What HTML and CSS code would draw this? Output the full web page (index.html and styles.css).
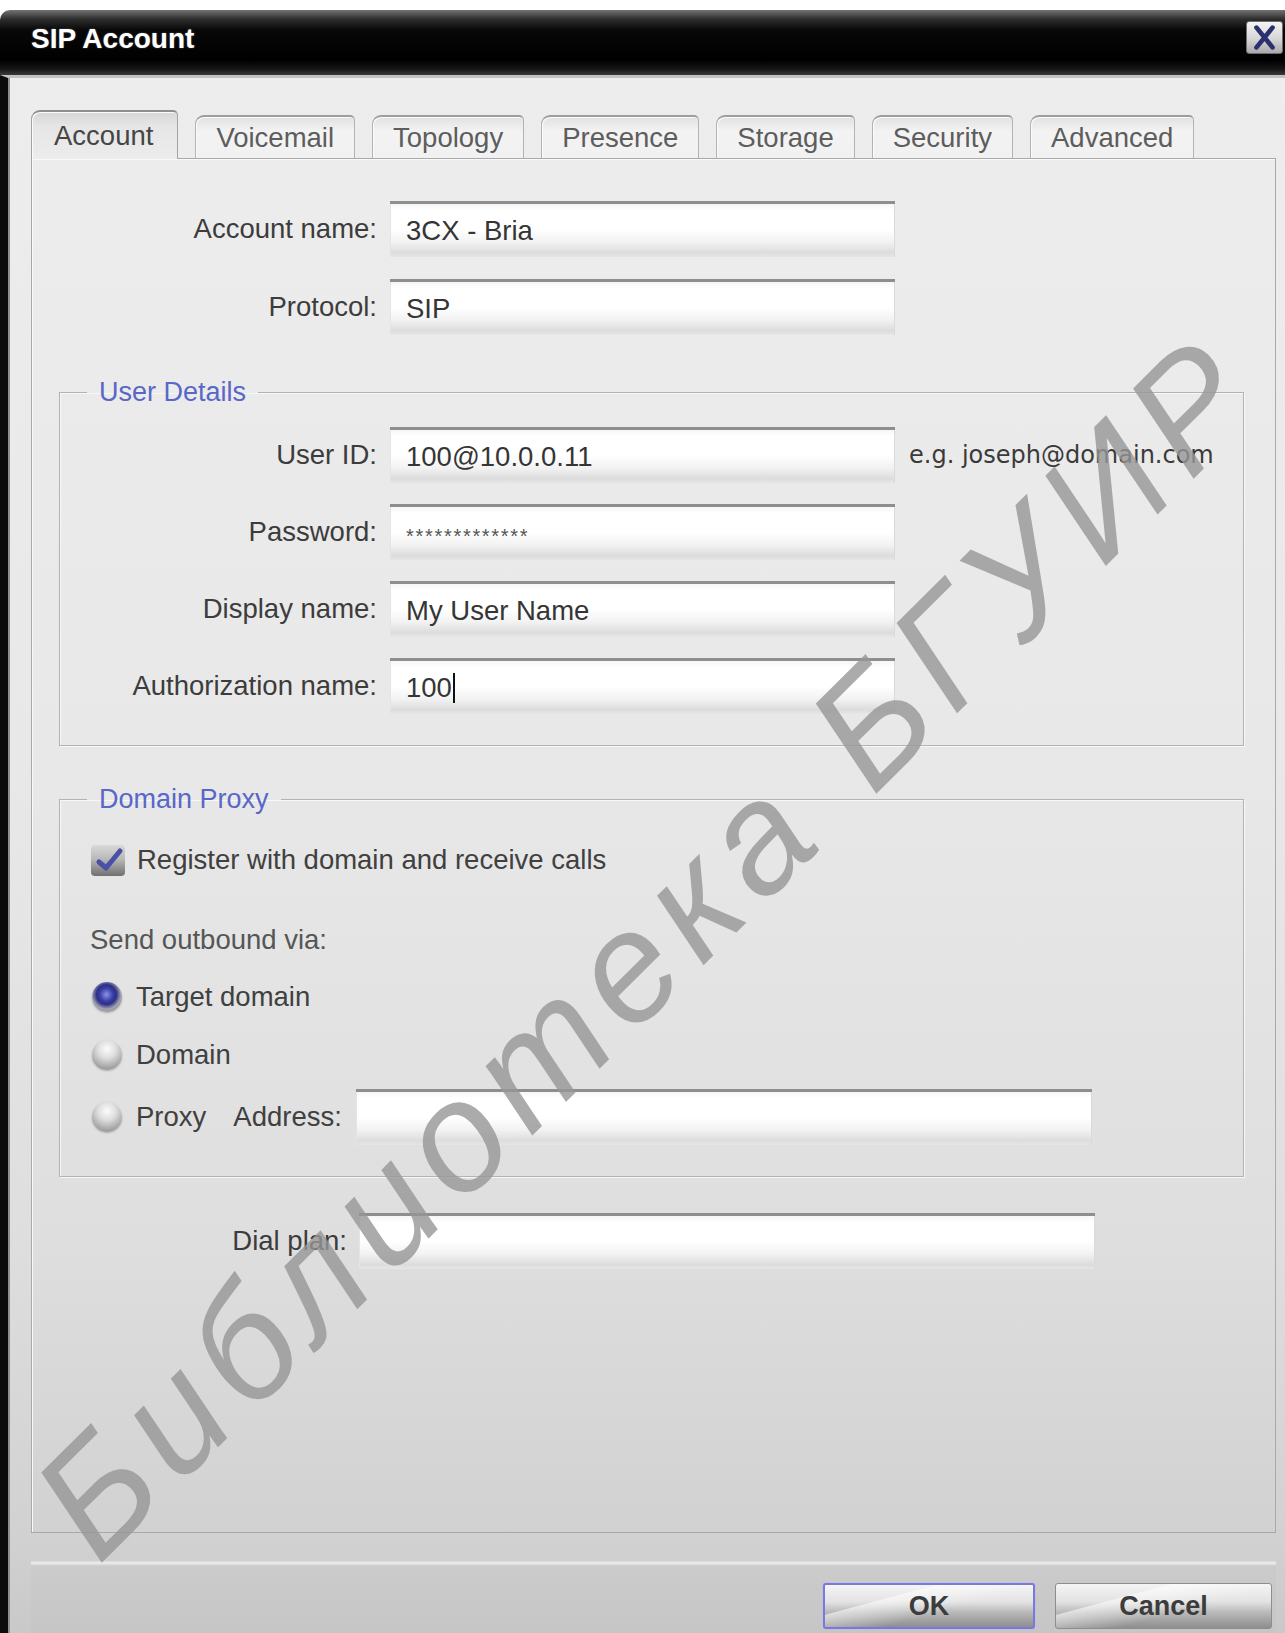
FILE: index.html
```html
<!DOCTYPE html>
<html lang="en">
<head>
<meta charset="utf-8">
<title>SIP Account</title>
<link rel="stylesheet" href="styles.css">
</head>
<body>
<div class="window">
  <header class="titlebar">
    <h1 class="title">SIP Account</h1>
    <button class="close" type="button" aria-label="Close">
      <svg viewBox="0 0 37 33" width="35" height="31" aria-hidden="true">
        <path d="M10 6 L27 27 M27 6 L10 27" stroke="#2b3170" stroke-width="5" stroke-linecap="round"/>
      </svg>
    </button>
  </header>

  <div class="client">
    <nav class="tabs">
      <div class="tab active">Account</div>
      <div class="tab">Voicemail</div>
      <div class="tab">Topology</div>
      <div class="tab">Presence</div>
      <div class="tab">Storage</div>
      <div class="tab">Security</div>
      <div class="tab">Advanced</div>
    </nav>

    <section class="panel">
      <div class="row top-row">
        <span class="lbl">Account name:</span>
        <div class="field">3CX - Bria</div>
      </div>
      <div class="row top-row">
        <span class="lbl">Protocol:</span>
        <div class="field">SIP</div>
      </div>

      <fieldset class="group user-group">
        <legend>User Details</legend>
        <div class="row">
          <span class="lbl">User ID:</span>
          <div class="field">100@10.0.0.11</div>
          <span class="hint">e.g. joseph@domain.com</span>
        </div>
        <div class="row">
          <span class="lbl">Password:</span>
          <div class="field"><span class="secret">*************</span></div>
        </div>
        <div class="row">
          <span class="lbl">Display name:</span>
          <div class="field">My User Name</div>
        </div>
        <div class="row">
          <span class="lbl">Authorization name:</span>
          <div class="field">100<span class="caret"></span></div>
        </div>
      </fieldset>

      <fieldset class="group proxy-group">
        <legend>Domain Proxy</legend>
        <div class="proxy-body">
          <div class="check-row">
            <span class="checkbox">
              <svg viewBox="0 0 37 34" width="37" height="34" aria-hidden="true">
                <defs>
                  <linearGradient id="boxFill" x1="0" y1="0" x2="0" y2="1">
                    <stop offset="0" stop-color="#d9d9d9"/>
                    <stop offset="0.45" stop-color="#b9b9b9"/>
                    <stop offset="1" stop-color="#6f6f6f"/>
                  </linearGradient>
                </defs>
                <rect x="1" y="2" width="34" height="31" rx="4" fill="url(#boxFill)"/>
                <path d="M9 19 L16 25 L30 8" fill="none" stroke="#4c4fa6" stroke-width="5" stroke-linecap="round" stroke-linejoin="round"/>
              </svg>
            </span>
            <span class="opt">Register with domain and receive calls</span>
          </div>
          <div class="send-via">Send outbound via:</div>
          <div class="radio-row target"><span class="radio on"></span><span class="opt">Target domain</span></div>
          <div class="radio-row domain"><span class="radio"></span><span class="opt">Domain</span></div>
          <div class="radio-row proxy-row">
            <span class="radio"></span><span class="opt">Proxy</span>
            <span class="addr-label">Address:</span>
            <div class="field wide"></div>
          </div>
        </div>
      </fieldset>

      <div class="row dial-row">
        <span class="lbl">Dial plan:</span>
        <div class="field wide"></div>
      </div>
    </section>

    <footer class="buttons">
      <button class="btn default" type="button">OK</button>
      <button class="btn cancel" type="button">Cancel</button>
    </footer>
  </div>
</div>

<div class="watermark">Библиотека БГУИР</div>
</body>
</html>
```

FILE: styles.css
```css
html, body {
  margin: 0;
  height: 1633px;
}

body {
  position: relative;
  overflow: hidden;
  background: #ffffff;
  font-family: "Liberation Sans", Arial, sans-serif;
}

/* ---------- window frame ---------- */
.window {
  margin-top: 10px;
  height: 1623px;
  display: flex;
  flex-direction: column;
}

.titlebar {
  flex: none;
  height: 65px;
  display: flex;
  justify-content: space-between;
  align-items: flex-start;
  border-top-left-radius: 10px;
  background: linear-gradient(to bottom,
    #737373 0px, #2e2e2e 9px, #080808 20px, #000 50px,
    #151515 59px, #3b3b3b 65px);
}

.title {
  margin: 0;
  padding: 15px 0 0 31px;
  font: bold 28px/1 "Liberation Sans", Arial, sans-serif;
  color: #ffffff;
  text-shadow: 0 0 2px rgba(255, 255, 255, 0.35);
}

.close {
  margin: 11px 2px 0 0;
  width: 37px;
  height: 33px;
  padding: 0;
  display: flex;
  align-items: center;
  justify-content: center;
  border: 1px solid #6d6d6d;
  border-radius: 3px;
  background: linear-gradient(to bottom, #f4f4f4, #d6d6d6 55%, #a9a9a9);
}

.client {
  flex: 1;
  display: flex;
  flex-direction: column;
  border-left: 8px solid #0b0b0b;
  border-top: 3px solid #c2c2c2;
  padding: 32px 9px 0 23px;
  background: linear-gradient(to bottom,
    #ededed 0%, #e8e8e8 45%, #dedede 75%, #d1d1d1 94%, #c9c9c9 100%);
  box-shadow: inset 2px 0 0 #8f8f8f;
}

/* ---------- tabs ---------- */
.tabs {
  flex: none;
  height: 49px;
  margin-bottom: -1px;
  display: flex;
  align-items: flex-end;
  gap: 17px;
  position: relative;
  z-index: 1;
}

.tab {
  box-sizing: border-box;
  height: 43px;
  margin-bottom: 1px;
  padding: 0 20px;
  display: flex;
  align-items: center;
  border: 1px solid #b3b3b3;
  border-top: 2px solid #9d9d9d;
  border-bottom: none;
  border-radius: 9px 5px 0 0;
  background: linear-gradient(to bottom, #e1e1e1, #f3f3f3 35%, #f1f1f1);
  font-size: 27.5px;
  color: #5d5d5d;
  box-shadow: inset 1px 1px 0 #fbfbfb;
}

.tab.active {
  height: 49px;
  margin-bottom: 0;
  padding: 0 24px 0 22px;
  border-color: #a4a4a4;
  border-top: 2px solid #8e8e8e;
  background: linear-gradient(to bottom, #d6d6d6, #e6e6e6 30%, #ececec);
  color: #454545;
}

/* ---------- content panel ---------- */
.panel {
  flex: 1;
  display: flex;
  flex-direction: column;
  padding-top: 42px;
  border: 1px solid #a9a9a9;
  box-shadow: inset 1px 1px 0 #f9f9f9;
}

.row {
  display: flex;
  align-items: center;
  height: 56px;
  flex: none;
}

.top-row + .top-row { margin-top: 22px; }

.lbl {
  box-sizing: border-box;
  width: 358px;
  padding-right: 13px;
  text-align: right;
  font-size: 27.5px;
  color: #3c3c3c;
  white-space: nowrap;
}

.field {
  box-sizing: border-box;
  width: 505px;
  height: 56px;
  padding-left: 16px;
  display: flex;
  align-items: center;
  border-top: 3px solid #8e8e8e;
  background: linear-gradient(to bottom,
    #f6f6f6 0%, #ffffff 12%, #ffffff 48%, #f2f2f2 72%, #dcdcdc 92%, #e6e6e6 100%);
  box-shadow: inset 1px 0 0 #e4e4e4, inset -1px 0 0 #dadada;
  font-size: 27.5px;
  color: #353535;
}

.field.wide { width: 736px; }

.secret {
  font-size: 20px;
  letter-spacing: 1.7px;
  color: #555;
  position: relative;
  top: 3px;
}

.caret {
  display: inline-block;
  width: 2px;
  height: 30px;
  margin-left: 1px;
  background: #111;
}

.hint {
  margin-left: 14px;
  font-family: "DejaVu Sans", Verdana, sans-serif;
  font-size: 24px;
  color: #3a3a3a;
  white-space: nowrap;
}

/* ---------- group boxes ---------- */
.group {
  margin: 0 31px 0 27px;
  padding: 19px 0 31px 0;
  min-width: 0;
  border: 1px solid #b3b3b3;
  box-shadow: 1px 1px 0 #f7f7f7, inset 1px 1px 0 #f7f7f7;
}

.group legend {
  margin-left: 27px;
  padding: 0 12px;
  font-size: 27px;
  line-height: 32px;
  color: #5967c8;
}

.user-group { margin-top: 41px; }
.user-group .lbl { width: 330px; }
.user-group .row + .row { margin-top: 21px; }

.proxy-group {
  margin-top: 37px;
  padding-top: 28px;
}

.proxy-body { padding-left: 30px; }

.check-row {
  height: 34px;
  display: flex;
  align-items: center;
}

.checkbox {
  display: block;
  width: 37px;
  height: 34px;
  margin-right: 10px;
}

.checkbox svg { display: block; }

.opt {
  font-size: 27.5px;
  color: #404040;
  white-space: nowrap;
}

.send-via {
  margin-top: 47px;
  height: 32px;
  line-height: 32px;
  font-size: 27.5px;
  color: #565656;
}

.radio-row {
  display: flex;
  align-items: center;
  height: 32px;
}

.radio-row.target { margin-top: 25px; }
.radio-row.domain { margin-top: 26px; }
.radio-row.proxy-row { margin-top: 18px; height: 56px; }

.radio {
  flex: none;
  width: 30px;
  height: 30px;
  margin: 0 14px 0 2px;
  border-radius: 50%;
  background: radial-gradient(circle at 50% 30%,
    #fbfbfb 0%, #dedede 35%, #b0b0b0 65%, #7c7c7c 100%);
  box-shadow: 0 1px 2px rgba(0, 0, 0, 0.25);
}

.radio.on {
  background: radial-gradient(circle at 48% 42%,
    #8e92e6 0%, #3b3fa8 28%, #2b2f86 42%, #a4a4ae 62%, #7b7b7b 100%);
}

.addr-label {
  margin: 0 14px 0 27px;
  font-size: 27.5px;
  color: #404040;
}

.dial-row { margin-top: 36px; }
.dial-row .lbl { width: 327px; padding-right: 12px; }

/* ---------- bottom button bar ---------- */
.buttons {
  flex: none;
  height: 100px;
  box-sizing: border-box;
  padding: 50px 4px 0 0;
  display: flex;
  justify-content: flex-end;
  align-items: flex-start;
  gap: 20px;
  background: linear-gradient(to bottom,
    transparent 0px, transparent 28px,
    #d9d9d9 28px, #ededed 30px, #e2e2e2 31px, #cbcbcb 33px, #c6c6c6 100%);
}

.btn {
  width: 212px;
  height: 46px;
  padding: 0;
  border: 1px solid #8d8d8d;
  border-radius: 3px;
  font: bold 27px/1 "Liberation Sans", Arial, sans-serif;
  color: #3c3c3c;
  background:
    linear-gradient(165deg, rgba(255,255,255,0) 0%, rgba(255,255,255,0) 30%, rgba(255,255,255,0.55) 31%, rgba(255,255,255,0) 60%),
    linear-gradient(to bottom, #f4f4f4 0%, #e3e3e3 40%, #b9b9b9 65%, #8e8e8e 100%);
}

.btn.default {
  border: 2px solid #7b7ad2;
  box-shadow: 0 0 0 1px #c0bfea;
}

.btn.cancel { width: 217px; }

/* ---------- diagonal library stamp ---------- */
.watermark {
  position: absolute;
  left: 648px;
  top: 945px;
  transform: translate(-50%, -50%) rotate(-44.8deg);
  font: italic 155px/1 "Liberation Sans", Arial, sans-serif;
  letter-spacing: 13px;
  color: rgba(150, 150, 150, 0.8);
  white-space: nowrap;
  pointer-events: none;
}
```
